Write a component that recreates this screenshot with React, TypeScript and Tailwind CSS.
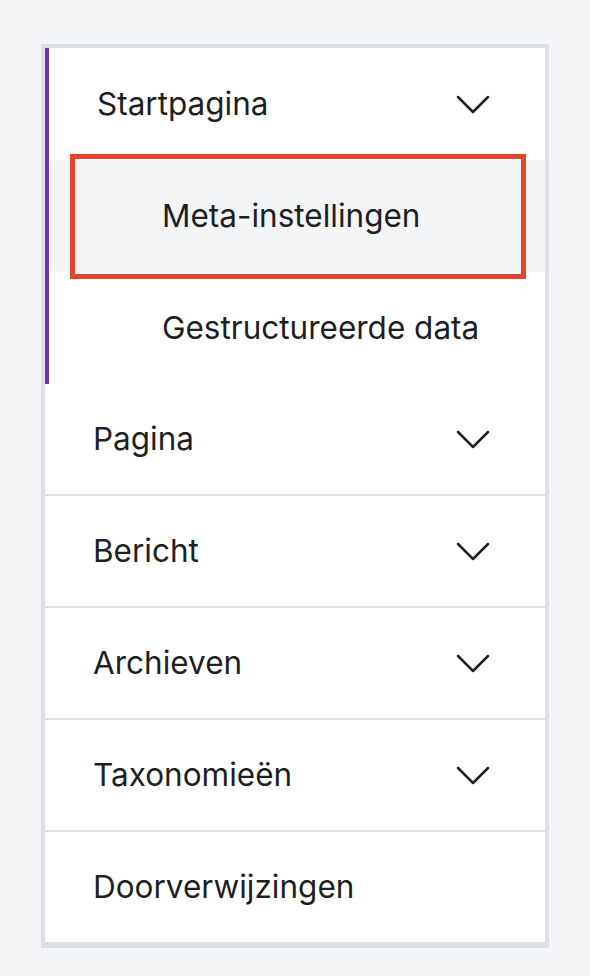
import { ReactNode } from 'react';

function Chevron() {
  return (
    <svg width="34" height="19" viewBox="0 0 34 19" fill="none" className="shrink-0">
      <path
        d="M2 2 L17 17 L32 2"
        stroke="#1e1f22"
        strokeWidth="2.5"
        strokeLinecap="round"
        strokeLinejoin="round"
      />
    </svg>
  );
}

function Row({ label, chevron = true, last = false }: { label: string; chevron?: boolean; last?: boolean }) {
  return (
    <div
      className={
        'flex items-center justify-between pl-[48px] pr-[55px] ' +
        (last ? 'h-[110px]' : 'h-[112px] border-b-2 border-[#dfe1e5]')
      }
    >
      <span>{label}</span>
      {chevron && <Chevron />}
    </div>
  );
}

function SubItem({ children, active = false }: { children: ReactNode; active?: boolean }) {
  return (
    <div className={'relative flex h-[112px] items-center pl-[113px] ' + (active ? 'bg-[#f3f4f6]' : '')}>
      <span>{children}</span>
      {active && (
        <div className="pointer-events-none absolute top-[-6px] bottom-[-7px] left-[21px] right-[19px] border-[5px] border-[#e8412c]" />
      )}
    </div>
  );
}

export default function App() {
  return (
    <div
      className="min-h-screen bg-[#f3f4f6] pt-[44px] pl-[41px] text-[31.5px] text-[#1e1f22]"
      style={{ fontFamily: 'Inter, "Noto Sans", sans-serif' }}
    >
      <div className="w-[508px] border-4 border-b-[6px] border-[#dcdfe4] bg-white">
        <div className="border-l-4 border-[#6734b4]">
          <div className="flex h-[112px] items-center justify-between pl-[48px] pr-[55px]">
            <span>Startpagina</span>
            <Chevron />
          </div>
          <SubItem active>Meta-instellingen</SubItem>
          <SubItem>Gestructureerde data</SubItem>
        </div>
        <Row label="Pagina" />
        <Row label="Bericht" />
        <Row label="Archieven" />
        <Row label="Taxonomieën" />
        <Row label="Doorverwijzingen" chevron={false} last />
      </div>
    </div>
  );
}
